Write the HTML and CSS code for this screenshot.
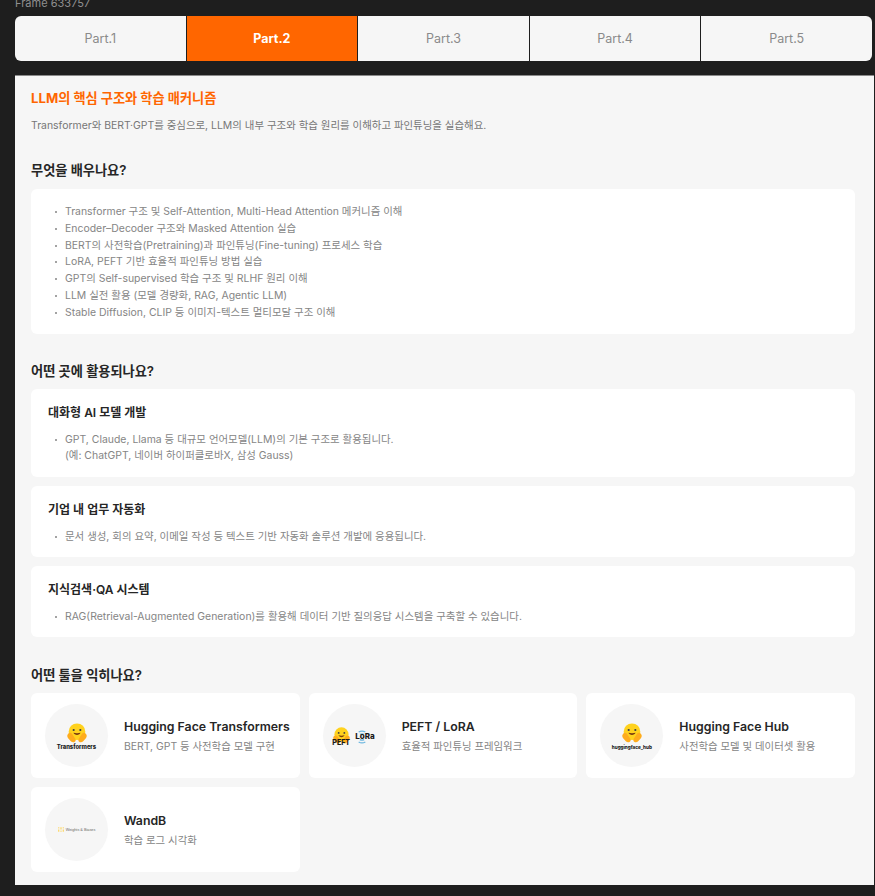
FILE: index.html
```html
<!DOCTYPE html>
<html lang="ko">
<head>
<meta charset="utf-8">
<title>Part.2</title>
<link rel="stylesheet" href="styles.css">
</head>
<body>
<svg class="defs" width="0" height="0" aria-hidden="true">
  <symbol id="hug" viewBox="0 0 24 24">
    <circle cx="12" cy="10.500" r="10" fill="#ffd21e"/>
    <path d="M1.200 13.200c-1.600 2-.8 4 .4 5.300l3.300 3.700c1.600 1.500 4.300 1.200 5.300-.6l.3-1.900-4.300-6.600c-1.300-1.600-3.600-1.800-5 .1z" fill="#ffac1c"/>
    <path d="M22.800 13.200c1.600 2 .8 4-.4 5.300l-3.300 3.700c-1.600 1.500-4.300 1.200-5.300-.6l-.3-1.900 4.300-6.600c1.300-1.600 3.600-1.800 5 .1z" fill="#ffac1c"/>
    <circle cx="8" cy="8.400" r="1.300" fill="#3a3b45"/>
    <circle cx="16" cy="8.400" r="1.300" fill="#3a3b45"/>
    <path d="M7.800 11.800c1 3.400 7.400 3.400 8.400 0-2.600.8-5.800.8-8.400 0z" fill="#7a3b10"/>
  </symbol>
</svg>

<div class="frame-label">Frame 633757</div>

<nav class="tabs">
  <div class="tab">Part.1</div>
  <div class="tab active">Part.2</div>
  <div class="tab">Part.3</div>
  <div class="tab">Part.4</div>
  <div class="tab">Part.5</div>
</nav>

<main class="panel">
  <h1 class="title">LLM의 핵심 구조와 학습 매커니즘</h1>
  <p class="lead">Transformer와 BERT·GPT를 중심으로, LLM의 내부 구조와 학습 원리를 이해하고 파인튜닝을 실습해요.</p>

  <h2 class="section first">무엇을 배우나요?</h2>
  <div class="card learn">
    <ul class="list">
      <li>Transformer 구조 및 Self-Attention, Multi-Head Attention 메커니즘 이해</li>
      <li>Encoder–Decoder 구조와 Masked Attention 실습</li>
      <li>BERT의 사전학습(Pretraining)과 파인튜닝(Fine-tuning) 프로세스 학습</li>
      <li>LoRA, PEFT 기반 효율적 파인튜닝 방법 실습</li>
      <li>GPT의 Self-supervised 학습 구조 및 RLHF 원리 이해</li>
      <li>LLM 실전 활용 (모델 경량화, RAG, Agentic LLM)</li>
      <li>Stable Diffusion, CLIP 등 이미지-텍스트 멀티모달 구조 이해</li>
    </ul>
  </div>

  <h2 class="section">어떤 곳에 활용되나요?</h2>
  <div class="uses">
    <div class="card use">
      <h3 class="use-title">대화형 AI 모델 개발</h3>
      <ul class="list">
        <li>GPT, Claude, Llama 등 대규모 언어모델(LLM)의 기본 구조로 활용됩니다.<br>(예: ChatGPT, 네이버 하이퍼클로바X, 삼성 Gauss)</li>
      </ul>
    </div>
    <div class="card use">
      <h3 class="use-title">기업 내 업무 자동화</h3>
      <ul class="list">
        <li>문서 생성, 회의 요약, 이메일 작성 등 텍스트 기반 자동화 솔루션 개발에 응용됩니다.</li>
      </ul>
    </div>
    <div class="card use">
      <h3 class="use-title">지식검색·QA 시스템</h3>
      <ul class="list">
        <li>RAG(Retrieval-Augmented Generation)를 활용해 데이터 기반 질의응답 시스템을 구축할 수 있습니다.</li>
      </ul>
    </div>
  </div>

  <h2 class="section tools-head">어떤 툴을 익히나요?</h2>
  <div class="tools">
    <div class="card tool">
      <div class="logo">
        <svg class="hug"><use href="#hug"/></svg>
        <span class="logo-text">Transformers</span>
      </div>
      <div class="tool-body">
        <div class="tool-name">Hugging Face Transformers</div>
        <div class="tool-desc">BERT, GPT 등 사전학습 모델 구현</div>
      </div>
    </div>
    <div class="card tool">
      <div class="logo logo-row">
        <div class="logo-col">
          <svg class="hug small"><use href="#hug"/></svg>
          <span class="logo-text peft">PEFT</span>
        </div>
        <div class="lora">
          <svg class="wifi" viewBox="0 0 12 16" aria-hidden="true">
            <path d="M2 2c2.500-1.400 5.500-1.400 8 0M3.500 4.800c1.500-.7 3.500-.7 5 0M3.500 11.200c1.500.7 3.500.7 5 0M2 14c2.500 1.400 5.500 1.400 8 0" fill="none" stroke="#6db7e0" stroke-width="1.600"/>
          </svg>
          <span class="logo-text lora-text">LoRa</span>
        </div>
      </div>
      <div class="tool-body">
        <div class="tool-name">PEFT / LoRA</div>
        <div class="tool-desc">효율적 파인튜닝 프레임워크</div>
      </div>
    </div>
    <div class="card tool">
      <div class="logo">
        <svg class="hug"><use href="#hug"/></svg>
        <span class="logo-text hub">huggingface_hub</span>
      </div>
      <div class="tool-body">
        <div class="tool-name">Hugging Face Hub</div>
        <div class="tool-desc">사전학습 모델 및 데이터셋 활용</div>
      </div>
    </div>
    <div class="card tool">
      <div class="logo logo-row wandb">
        <svg class="wb-mark" viewBox="0 0 8 8" aria-hidden="true">
          <path d="M1 1v1.500M1 4v3M4 1v3M4 5.500V7M7 1v1.500M7 4v3" stroke="#ffcc33" stroke-width="1.200" fill="none"/>
        </svg>
        <span class="wb-text">Weights &amp; Biases</span>
      </div>
      <div class="tool-body">
        <div class="tool-name">WandB</div>
        <div class="tool-desc">학습 로그 시각화</div>
      </div>
    </div>
  </div>
</main>
</body>
</html>
```
FILE: styles.css
```css
* { box-sizing: border-box; }
html, body { margin: 0; padding: 0; }
body {
  width: 875px;
  height: 896px;
  overflow: hidden;
  background: #1e1e1e;
  font-family: Inter, "Noto Sans CJK KR", "Noto Sans", sans-serif;
  color: #262626;
  padding: 0 1px 0 15px;
}
.defs { position: absolute; }
.frame-label {
  height: 16px;
  margin: -5px 0 5px;
  font-size: 11px;
  line-height: 16px;
  color: #8f8f8f;
}
.tabs {
  display: flex;
  width: 857px;
  height: 45px;
  gap: 1px;
  border-radius: 6px;
  overflow: hidden;
}
.tab {
  flex: 1;
  display: flex;
  align-items: center;
  justify-content: center;
  background: #f6f6f6;
  color: #8a8a8a;
  font-size: 12.500px;
}
.tab.active {
  background: #ff6600;
  color: #fff;
  font-weight: 700;
}
.panel {
  height: 810px;
  margin-top: 14px;
  background: #f6f6f6;
  border-top: 1px solid #8a8a8a;
  padding: 13px 19px 0 16px;
}
.title {
  margin: 0;
  font-size: 13.200px;
  line-height: 18px;
  font-weight: 700;
  color: #ff6600;
}
.lead {
  margin: 11px 0 0;
  font-size: 10.450px;
  line-height: 16px;
  color: #777;
}
.section {
  margin: 0;
  font-size: 13.200px;
  line-height: 20px;
  font-weight: 600;
  color: #262626;
}
.section.first { margin-top: 26px; }
.card {
  background: #fff;
  border-radius: 6px;
}
.learn {
  margin: 9px 0 27px;
  padding: 15px 17px 12px;
}
.list {
  margin: 0;
  padding: 0;
  list-style: none;
  font-size: 10.450px;
  line-height: 16.800px;
  color: #858585;
}
.list li {
  position: relative;
  padding-left: 17px;
}
.list li::before {
  content: "";
  position: absolute;
  left: 7px;
  top: 7px;
  width: 2px;
  height: 2px;
  border-radius: 50%;
  background: #858585;
}
.uses {
  display: flex;
  flex-direction: column;
  gap: 9px;
  margin-top: 8px;
}
.use { padding: 15px 17px 11.500px; }
.use-title {
  margin: 0 0 11px;
  font-size: 12px;
  line-height: 17px;
  font-weight: 600;
  color: #262626;
}
.tools-head { margin-top: 28px; }
.tools {
  display: grid;
  grid-template-columns: repeat(3, minmax(0, 1fr));
  gap: 9px;
  margin-top: 8px;
}
.tool {
  display: flex;
  align-items: center;
  gap: 16px;
  height: 85px;
  padding: 0 14px;
}
.tool-body { padding-top: 2px; }
.logo {
  flex: none;
  width: 63px;
  height: 63px;
  border-radius: 50%;
  background: #f6f6f6;
  display: flex;
  flex-direction: column;
  align-items: center;
  justify-content: center;
  padding-top: 3px;
}
.logo-row { flex-direction: row; }
.hug {
  display: block;
  width: 20px;
  height: 20px;
}
.hug.small {
  width: 17px;
  height: 17px;
  margin-bottom: -5px;
}
.logo-text {
  font-size: 5.800px;
  line-height: 8px;
  font-weight: 800;
  color: #1a1a1a;
  white-space: nowrap;
}
.logo-text.hub { font-size: 4.600px; margin-top: 1px; }
.logo-text.peft { font-size: 7px; position: relative; }
.logo-col {
  display: flex;
  flex-direction: column;
  align-items: center;
}
.lora {
  position: relative;
  width: 22px;
  height: 20px;
  margin-left: 4px;
  display: flex;
  align-items: center;
  justify-content: center;
}
.wifi {
  position: absolute;
  left: 3px;
  top: 2px;
  width: 10px;
  height: 16px;
}
.logo-text.lora-text {
  position: relative;
  font-size: 8px;
  margin-top: -2px;
}
.wandb { gap: 2px; padding-top: 0; }
.wb-mark { width: 6px; height: 7px; }
.wb-text {
  font-size: 3.800px;
  color: #666;
  white-space: nowrap;
  font-family: "Liberation Sans", sans-serif;
}
.tool-name {
  font-size: 12.300px;
  line-height: 17px;
  font-weight: 600;
  color: #262626;
  white-space: nowrap;
}
.tool-desc {
  margin-top: 4px;
  font-size: 10.400px;
  line-height: 16px;
  color: #858585;
  white-space: nowrap;
}
```
